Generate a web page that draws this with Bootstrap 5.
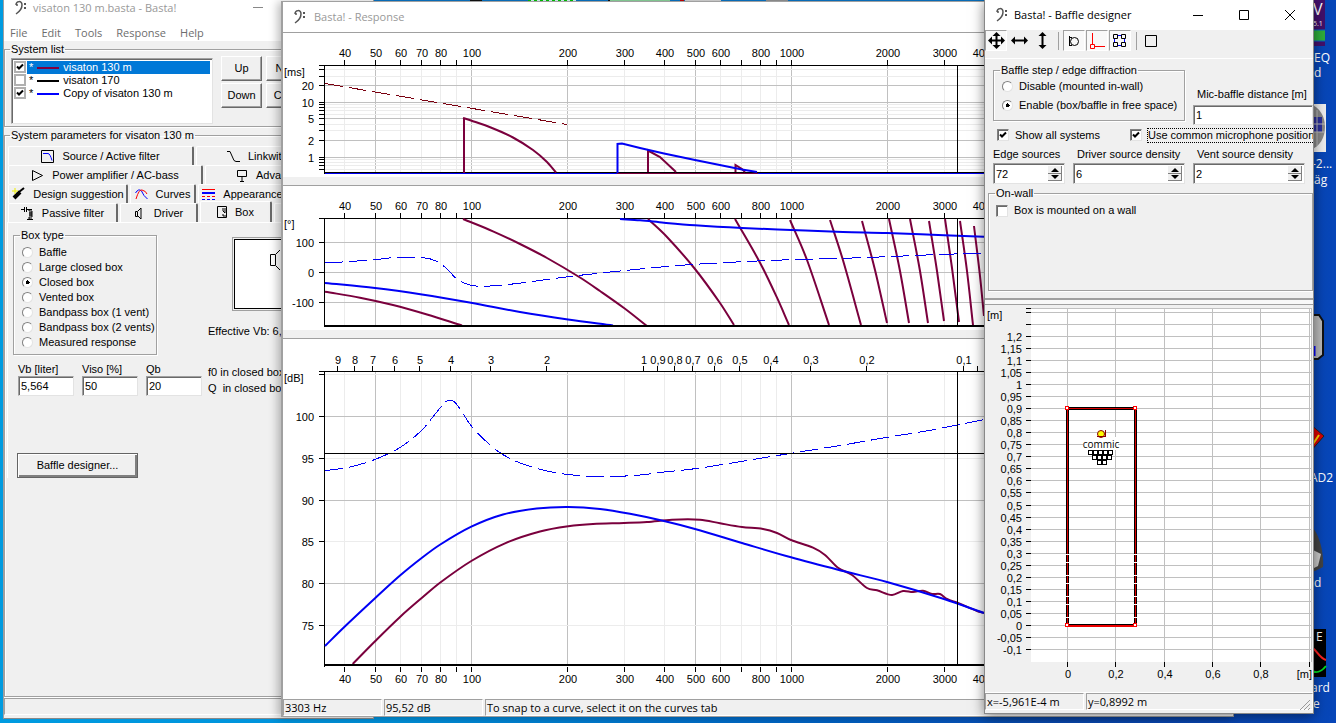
<!DOCTYPE html>
<html lang="en">
<head>
<meta charset="utf-8">
<meta name="viewport" content="width=device-width, initial-scale=1">
<title>Basta!</title>
<link href="https://cdn.jsdelivr.net/npm/bootstrap@5.3.0/dist/css/bootstrap.min.css" rel="stylesheet">
<style>
:root{--face:#f0f0f0;--shade:#a0a0a0;--dark:#696969;--ui:"Liberation Sans",Arial,sans-serif;--chrome:"Open Sans","Noto Sans",sans-serif}
html,body{height:100%}
body{margin:0;font:11px/13px var(--ui);color:#000;background:linear-gradient(90deg,#009be0 0,#0090da 30%,#0064c4 60%,#0a4ab4 80%,#0746b8);overflow:hidden}
.desktop{height:100%;overflow:hidden}
.win{position:absolute;overflow:hidden;background:var(--face);border:1px solid var(--shade)}
.win-main{left:3px;top:0;bottom:4px;width:371px;border-top:0;border-color:#d8d8d8 var(--shade) #888}
.win-resp{left:281px;right:102px;top:1px;bottom:6px;border-left-width:2px;box-shadow:-3px 1px 9px rgba(0,0,0,.28)}
.win-baffle{right:22px;width:330px;top:0;bottom:9px;border-top:0;border-color:#888;box-shadow:0 2px 12px rgba(0,0,0,.5)}
.titlebar{background:#fff;height:30px;font:11px/16px var(--chrome)}
.titlebar.idle{color:#999}
.win-main .titlebar{height:24px}
.titlebar button{width:46px;border:0;background:none;padding:0;color:inherit;line-height:0}
.titlebar h1{font:inherit;margin:0}
.menus{background:#fff;gap:14px;padding:0 6px;font:11px/17px var(--chrome);margin:0;list-style:none}
.menus a{color:#6d6d6d;text-decoration:none}
fieldset.grp{border:1px solid var(--shade);box-shadow:1px 1px #fff,inset 1px 1px #fff;min-width:0}
fieldset.grp>legend{float:none;width:auto;font:inherit;margin:0 0 0 6px;padding:0 1px}
.win-main>fieldset{margin-top:2px}
.win-main>fieldset>legend{margin-left:5px}
.listgroup{padding-bottom:2px}
.params{height:568px}
.sunk{background:#fff;border:1px solid;border-color:var(--shade) #e3e3e3 #e3e3e3 var(--shade);box-shadow:inset 1px 1px var(--dark)}
.field{width:100%;height:20px;padding:0 2px;border-radius:0;font:inherit;outline:0;min-width:0}
.push{font:inherit;border-radius:0;border:1px solid;border-color:#fff var(--dark) var(--dark) #fff;box-shadow:inset -1px -1px var(--shade);background:var(--face);padding:0;height:25px}
.push.default-btn{border:1px solid #646464;box-shadow:inset 1px 1px #fff,inset -2px -2px #808080;width:121px}
.orderbtns{display:grid;grid-template-columns:41px 41px;gap:2px 4px;align-content:start}
.systems{width:202px;height:66px;padding:2px;margin:2px 0 0 6px}
.systems label{height:13px;width:100%}
.systems label .nm{flex:1;margin-left:1px;padding-left:2px;height:13px}
.systems label.on .nm{background:#0078d7;color:#fff}
input[type=checkbox].tick{appearance:none;width:12px;height:12px;margin:0;flex:none;background:#fff;border:1px solid;border-color:#808080 #e3e3e3 #e3e3e3 #808080;box-shadow:inset 1px 1px #696969}
.systems input[type=checkbox].tick{border:2px solid #b0b0b0;box-shadow:none}
input[type=checkbox].tick:checked{background:#fff url("data:image/svg+xml,%3Csvg xmlns='http://www.w3.org/2000/svg' viewBox='0 0 8 8'%3E%3Cpath d='M1 3.5l2 2 4-4' fill='none' stroke='%23000' stroke-width='2'/%3E%3C/svg%3E") center/8px no-repeat}
input[type=radio].dot{appearance:none;width:11px;height:11px;margin:0;flex:none;border-radius:50%;border:1px solid;border-color:#808080 #e3e3e3 #e3e3e3 #808080;background:#fff}
input[type=radio].dot:checked{background:radial-gradient(circle,#000 0 2px,#fff 2px)}
.opt{display:flex;align-items:center;gap:6px}
.tabrows{padding-top:4px}
.tabrow{display:flex;gap:2px;height:19px;padding-left:3px}
.tabrow button{flex:none;display:flex;align-items:center;justify-content:center;gap:8px;height:19px;font:inherit;padding:0 2px;background:var(--face);border:1px solid #fff;border-right:2px solid var(--dark);border-bottom:0;border-radius:2px 2px 0 0;white-space:nowrap}
.tabrow button.sel{height:21px;margin-top:-2px}
.tabrow .t160{justify-content:start;padding-left:30px}
.t186{width:186px}.t195{width:195px}.t120{width:120px}.t110{width:110px}.t66{width:66px}.t78{width:78px}.t72{width:72px}.t90{width:90px}.t160{width:160px}
.sheet{border-left:1px solid #fff;border-top:1px solid #fff;margin-left:2px;padding:6px 0 0 5px;display:grid;grid-template-columns:144px 1fr;column-gap:51px}
.boxtype{padding:3px 0 4px}
.boxtype .opt{height:15px;padding-left:8px}
.preview{background:#fff;border:1px solid #000;outline:1px solid var(--shade);outline-offset:1px;height:70px;margin:10px 0 0 26px;width:95px}
.trio{display:grid;grid-template-columns:repeat(3,56px);gap:0 8px;margin:8px 0 0 5px;width:190px}
.note{white-space:nowrap}
.veff{margin-top:16px}
.qlines{padding-top:9px;line-height:16px}
.designer{padding:57px 0 0 4px}
svg{display:block;flex:none}
.chart{box-sizing:content-box;width:100%;background:#fff;border-top:1px solid var(--shade)}
.splitbar{height:8px}
.status{font:11px/15px var(--chrome);display:flex;gap:2px;border-top:1px solid #fff}
.status div{border:1px solid;border-color:var(--shade) #fff #fff var(--shade);padding:0 1px;height:17px;white-space:nowrap}
.status .cell{width:99px}
.toolbar{display:flex;align-items:center;gap:1px;height:29px;padding:1px 0 8px;border-bottom:1px solid #fff}
.toolbar button{width:22px;height:21px;padding:0;border:0;background:none;display:flex;align-items:center;justify-content:center}
.toolbar button.down{background:#f8f8f8;border:1px solid;border-color:var(--shade) #fff #fff var(--shade)}
.toolbar i{width:1px;height:18px;background:var(--shade);margin:0 3px 0 4px}
.controls{display:grid;grid-template-columns:72px 112px 112px;gap:0 8px;padding:5px 0 0 8px}
.step{grid-column:span 2;height:57px}
.step .opt{height:19px;padding-left:8px}
.mic{margin-right:-8px;padding-top:24px}
.mic span{display:block;height:17px}
.checks{grid-column:span 3;height:18px;margin-top:1px;gap:30px;padding-left:4px;white-space:nowrap}
.focused{outline:1px dotted #000}
.caps{height:19px;padding:4px 0 0 4px;white-space:nowrap}
.caps:first-of-type{padding-left:0}
.spin{position:relative;display:block}
.spin .field{height:21px}
.spin svg{position:absolute;right:3px;top:3px}
.onwall{margin:3px 0 0 3px;height:104px}
.onwall .opt{padding:4px 0 0 7px}
.rule{border-top:2px solid var(--shade);border-bottom:1px solid var(--shade);height:7px;background:#f8f8f8;margin-top:7px}
svg text{font:11px var(--ui)}
.fringe{position:absolute;right:0;top:0}
.fringe text{font:12px var(--chrome);fill:#fff}
.topedge{position:absolute;left:374px;top:0}
</style>
</head>
<body>
<main class="desktop">
<svg class="topedge" width="612" height="3"><path d="M0 0h612v3H0z" fill="#0a78cc"/><path d="M96 0h12v2H96zM234 0h3v2h-3z" fill="#111"/><path d="M154 1h48" stroke="#dff" stroke-width="3"/><path d="M154 1h48" stroke="#0c0" stroke-width="3" stroke-dasharray="3"/><path d="M236 0h60v2h-60z" fill="#8fdca0"/><path d="M306 0h4v2h-4z" fill="#c00"/><path d="M311 0h36v2h-36z" fill="#ddd"/><path d="M392 0h22v2h-22z" fill="#999"/></svg>
<svg class="fringe" width="26" height="723" viewBox="1310 0 26 723">
<path d="M1310 0h15v46h-15z" fill="#43106b"/><text x="1313" y="15" style="font-size:16px">V</text><text x="1313" y="26" style="font-size:7px">5.1</text><path d="M1310 30h15v11h-15z" fill="#2fae3c"/><path d="M1310 30h15M1310 41h15" stroke="#06c"/>
<text x="1314" y="62">EQ</text><text x="1314" y="77">d</text>
<path d="M1310 104h16v48h-16z" fill="#eee"/><path d="M1310 104c20 6 20 40 0 46z" fill="#888"/><path d="M1314 117h8v15h-8z" fill="#2b2f9a"/><path d="M1310 124h15M1310 132h15M1317 110v36" stroke="#bbb"/>
<text x="1312" y="168">-2...</text><text x="1314" y="184">äg</text>
<path d="M1310 315h9l4 6v34l-5 4h-8z" fill="#bbb" stroke="#111" stroke-width="2"/><path d="M1314 346v10" stroke="#00f" stroke-width="3"/>
<path d="M1310 424l14 12-14 16z" fill="#d00" stroke="#222"/><path d="M1313 444l6-9" stroke="#fd0" stroke-width="2"/><text x="1310" y="482">AD2</text>
<path d="M1310 525c10 8 14 30 13 42l-8 4h-5z" fill="#444"/><path d="M1313 550l8 4-3 12-4 2z" fill="#ccc"/><text x="1314" y="587">d</text>
<path d="M1310 629h16v48h-16z" fill="#000"/><text x="1316" y="641" font-weight="700">E</text><path d="M1312 648c5 2 7 10 14 12" stroke="#f22" stroke-width="2" fill="none"/><path d="M1312 671c6 3 10 0 14-5" stroke="#0d2" stroke-width="2" fill="none"/><text x="1311" y="692">ard</text><text x="1313" y="708">e</text>
</svg>

<section class="win win-main">
 <header class="titlebar idle d-flex align-items-start"><svg width="29" height="16"><g transform="translate(11 1)"><path d="M1 4C1 0 7-1 7 4c0 4-3 7-6 9M1 4h2" fill="none" stroke="#555" stroke-width="1.5"/><path d="M9 2h2v2H9zM9 6h2v2H9z" fill="#555"/></g></svg><h1>visaton 130 m.basta - Basta!</h1>
 <div class="ms-auto d-flex"><button aria-label="Minimize"><svg width="46" height="15"><path d="M18 7.500h10" stroke="#888"/></svg></button><button aria-label="Maximize"><svg width="46" height="15"><path d="M18.500 2.500h9v9h-9z" fill="none" stroke="#888"/></svg></button><button aria-label="Close"><svg width="46" height="15"><path d="M18 2l10 10M28 2L18 12" stroke="#888"/></svg></button></div></header>
 <ul class="menus d-flex"><li><a href="#">File</a></li><li><a href="#">Edit</a></li><li><a href="#">Tools</a></li><li><a href="#">Response</a></li><li><a href="#">Help</a></li></ul>
 <fieldset class="grp listgroup"><legend>System list</legend>
  <div class="d-flex gap-2"><div class="systems sunk" id="systems"></div>
  <div class="orderbtns"><button class="push">Up</button><button class="push">New</button><button class="push">Down</button><button class="push">Copy</button></div></div>
 </fieldset>
 <fieldset class="grp params"><legend>System parameters for visaton 130 m</legend>
  <div class="tabrows">
  <div class="tabrow"><button class="t186"><svg width="13" height="13" fill="none"><path d="M.5.5h12v12H.5z" stroke="#000"/><path d="M2 3.500h5q2 0 4 7" stroke="#00f"/></svg>Source / Active filter</button><button class="t160"><svg width="13" height="13" fill="none"><path d="M0 1.500h3l4 9 2 1h4" stroke="#000"/></svg>Linkwitz</button></div>
  <div class="tabrow"><button class="t195"><svg width="13" height="13" fill="none"><path d="M1.500 1.500v10l10-5z" stroke="#000"/></svg>Power amplifier / AC-bass</button><button class="t160"><svg width="12" height="13" fill="none"><path d="M1.500 1.500h9v6h-9zM6 7v5M4 12.500h4" stroke="#000"/></svg>Advanced</button></div>
  <div class="tabrow"><button class="t120"><svg width="14" height="14"><path d="M3 11l6-6" stroke="#000" stroke-width="4"/><path d="M8 5l5-4" stroke="#000" stroke-width="2"/><path d="M1 4h6M4 1v6" stroke="#ee0"/></svg>Design suggestion</button><button class="t66"><svg width="13" height="12" fill="none"><path d="M.5 5q3-5 6-2 2 5 6 8" stroke="#00f"/><path d="M1 11q3-10 6-9 4 1 5 4" stroke="#f00"/></svg>Curves</button><button class="t90"><svg width="13" height="12"><path d="M0 1.500h13" stroke="#f00"/><path d="M0 5h13" stroke="#00f" stroke-width="2"/><path d="M0 8.500h13" stroke="#f00" stroke-dasharray="3 2"/><path d="M0 11.500h13" stroke="#00f" stroke-dasharray="3 2"/></svg>Appearance</button></div>
  <div class="tabrow"><button class="t110"><svg width="13" height="13" fill="none"><path d="M0 2.500h3M3.500 0v5M5.500 0v5M5 2.500h6M8 2v2h3v2H8h3v2H8h3v2H8v2h3M6 12.500h6" stroke="#000"/></svg>Passive filter</button><button class="t78"><svg width="8" height="13" fill="none"><path d="M1.500 4.500h2v5h-2zM4 4l3-3v11L4 9" stroke="#000"/></svg><span class="ps-1">Driver</span></button><button class="t72 sel"><svg width="10" height="13" fill="none"><path d="M.5.5h9v11h-9z" stroke="#000"/><path d="M6 2v3l2 2v-5M6 8v2h3" stroke="#000"/></svg>Box</button><button class="t90">Port</button></div>
  </div>
  <div class="sheet">
   <fieldset class="grp boxtype"><legend>Box type</legend><div id="types"></div></fieldset>
   <div><div class="preview"><svg width="45" height="67" fill="none"><path d="M35.500 14.500h5v11h-5zM41 14l8-8M41 26l8 8" stroke="#000"/></svg></div><div class="note veff">Effective Vb: 6,0</div></div>
   <div class="trio"><label for="vb">Vb [liter]</label><label for="vi">Viso [%]</label><label for="qb">Qb</label><input id="vb" class="field sunk" value="5,564"><input id="vi" class="field sunk" value="50"><input id="qb" class="field sunk" value="20"></div>
   <div class="note qlines">f0 in closed box<br>Q &nbsp;in closed box</div>
   <div class="designer"><button class="push default-btn">Baffle designer...</button></div>
  </div>
 </fieldset>
 <footer class="status"><div class="flex-fill"></div></footer>
</section>

<section class="win win-resp d-flex flex-column">
 <header class="titlebar idle d-flex align-items-center"><svg width="31" height="16"><g transform="translate(11 1)"><path d="M1 4C1 0 7-1 7 4c0 4-3 7-6 9M1 4h2" fill="none" stroke="#555" stroke-width="1.5"/><path d="M9 2h2v2H9zM9 6h2v2H9z" fill="#555"/></g></svg><h1>Basta! - Response</h1></header>
 <svg class="chart" id="delay" height="144" viewBox="283 32 949 144" preserveAspectRatio="xMinYMin"></svg><div class="splitbar"></div>
 <svg class="chart" id="phase" height="144" viewBox="283 185 949 144" preserveAspectRatio="xMinYMin"></svg><div class="splitbar"></div>
 <svg class="chart" id="level" height="359" viewBox="283 338 949 359" preserveAspectRatio="xMinYMin"></svg>
 <footer class="status"><div class="cell">3303 Hz</div><div class="cell">95,52 dB</div><div class="flex-fill">To snap to a curve, select it on the curves tab</div></footer>
</section>

<section class="win win-baffle">
 <header class="titlebar d-flex align-items-center"><svg width="29" height="16"><g transform="translate(11 1)"><path d="M1 4C1 0 7-1 7 4c0 4-3 7-6 9M1 4h2" fill="none" stroke="#555" stroke-width="1.5"/><path d="M9 2h2v2H9zM9 6h2v2H9z" fill="#555"/></g></svg><h1>Basta! - Baffle designer</h1>
 <div class="ms-auto d-flex"><button aria-label="Minimize"><svg width="46" height="15"><path d="M18 7.500h10" stroke="#000"/></svg></button><button aria-label="Maximize"><svg width="46" height="15"><path d="M18.500 2.500h9v9h-9z" fill="none" stroke="#000"/></svg></button><button aria-label="Close"><svg width="46" height="15"><path d="M18 2l10 10M28 2L18 12" stroke="#000"/></svg></button></div></header>
 <div class="toolbar">
  <button class="down" aria-label="Move"><svg width="17" height="17"><path d="M3 8.500h11M8.500 3v11" stroke="#000" stroke-width="2"/><path d="M0 8.500l4-4v8zM17 8.500l-4-4v8zM8.500 0l-4 4h8zM8.500 17l-4-4h8z"/></svg></button>
  <button aria-label="Move horizontally"><svg width="17" height="17"><path d="M3 8.500h11" stroke="#000" stroke-width="2"/><path d="M0 8.500l4-4v8zM17 8.500l-4-4v8z"/></svg></button>
  <button aria-label="Move vertically"><svg width="17" height="17"><path d="M8.500 3v11" stroke="#000" stroke-width="2"/><path d="M8.500 0l-4 4h8zM8.500 17l-4-4h8z"/></svg></button><i></i>
  <button class="down" aria-label="Microphone"><svg width="12" height="12" fill="none" stroke="#000"><circle cx="6.500" cy="6.500" r="4"/><path d="M1.500 1v10M1 2.500h3M1 10.500h3"/></svg></button>
  <button class="down" aria-label="Origin"><svg width="16" height="16" fill="none" stroke="#f00"><path d="M3.500 0v11M6 13.500h10M1.500 11.500h4v4h-4z"/></svg></button>
  <button class="down" aria-label="Nodes"><svg width="14" height="14" fill="none" stroke="#000"><path d="M.5.5h4v4h-4zM8.500.5h4v4h-4zM.5 8.500h4v4h-4zM8.500 8.500h4v4h-4z"/><path d="M1.500 5v3M11.500 5v3M5 1.500h3M5 11.500h3" stroke="#00f"/></svg></button><i></i>
  <button aria-label="Rectangle"><svg width="14" height="12" fill="none" stroke="#000"><path d="M.5.5h11v11H.5z"/></svg></button>
 </div>
 <div class="controls">
  <fieldset class="grp step"><legend>Baffle step / edge diffraction</legend><label class="opt"><input type="radio" class="dot" name="step">Disable (mounted in-wall)</label><label class="opt"><input type="radio" class="dot" name="step" checked>Enable (box/baffle in free space)</label></fieldset>
  <label class="mic text-nowrap"><span class="ps-1">Mic-baffle distance [m]</span><input class="field sunk" value="1"></label>
  <div class="checks d-flex"><label class="opt"><input type="checkbox" class="tick" checked>Show all systems</label><label class="opt"><input type="checkbox" class="tick" checked><span class="focused">Use common microphone position</span></label></div>
  <label for="s1" class="caps ps-0">Edge sources</label><label for="s2" class="caps">Driver source density</label><label for="s3" class="caps">Vent source density</label>
  <span class="spin"><input id="s1" class="field sunk" value="72"></span><span class="spin"><input id="s2" class="field sunk" value="6"></span><span class="spin"><input id="s3" class="field sunk" value="2"></span>
 </div>
 <fieldset class="grp onwall"><legend>On-wall</legend><label class="opt"><input type="checkbox" class="tick">Box is mounted on a wall</label></fieldset>
 <div class="rule"></div>
 <svg id="plan" width="328" height="387" viewBox="985 306 328 387"></svg>
 <footer class="status"><div class="cell">x=-5,961E-4 m</div><div class="flex-fill d-flex justify-content-between">y=0,8992 m<svg width="14" height="14" class="mt-1"><path d="M3 12L13 2M7 12l6-6M11 12l2-2" stroke="#999"/></svg></div></footer>
</section>
</main>
<script>
const $ = id => document.getElementById(id);
$('systems').innerHTML = [['visaton 130 m','#800040',1],['visaton 170','#000',0],['Copy of visaton 130 m','#00f',1]].map(([n,c,on],i)=>
 `<label class="d-flex ${i?'':'on'}"><input type="checkbox" class="tick" ${on?'checked':''}><span class="nm d-flex align-items-center gap-1"><span>*</span><svg width="22" height="2"><path d="M0 1h22" stroke="${c}" stroke-width="2"/></svg>${n}</span></label>`).join('');
$('types').innerHTML = ['Baffle','Large closed box','Closed box','Vented box','Bandpass box (1 vent)','Bandpass box (2 vents)','Measured response'].map((n,i)=>
 `<label class="opt"><input type="radio" class="dot" name="type" ${i==2?'checked':''}>${n}</label>`).join('');
document.querySelectorAll('.spin').forEach(s=>s.insertAdjacentHTML('beforeend','<svg width="14" height="15"><path d="M0 0h14v15H0z" fill="#f0f0f0"/><path d="M13.500 0v15M0 14.500h14M0 7.500h14" stroke="#808080"/><path d="M3 6l4-4 4 4zM3 9l4 4 4-4z"/></svg>'));

const line=(x1,y1,x2,y2,c='#000',w=1)=>`<path d="M${x1} ${y1}L${x2} ${y2}" stroke="${c}" stroke-width="${w}" shape-rendering="crispEdges"/>`;
const text=(x,y,s,a='middle')=>`<text x="${x}" y="${y}" text-anchor="${a}">${s}</text>`;
const half=v=>Math.floor(v)+.5;
const fx=f=>half(471.5+320*Math.log10(f/100));
const smooth=s=>{const p=s.trim().split(' ').map(q=>q.split(',').map(Number));let d='M'+p[0];
 for(let i=0;i<p.length-1;i++){const a=p[i-1]||p[i],b=p[i],c=p[i+1],e=p[i+2]||c;
  const k=(c[0]-b[0])/3,m1=(c[1]-a[1])/((c[0]-a[0])||1),m2=(e[1]-b[1])/((e[0]-b[0])||1);
  d+=`C${b[0]+k} ${b[1]+k*m1} ${c[0]-k} ${c[1]-k*m2} ${c}`}return d};
const curve=(s,c,w=2,dash='')=>`<path d="${smooth(s)}" fill="none" stroke="${c}" stroke-width="${w}" ${dash?'stroke-dasharray="18 6" shape-rendering="crispEdges"':''}/>`;
const poly=(s,c)=>`<polyline points="${s}" fill="none" stroke="${c}" stroke-width="2"/>`;
const freqs=[40,50,60,70,80,90,100,200,300,400,500,600,700,800,900,1000,2000,3000,4000,5000,6000];
const major=[50,100,200,500,1000,2000,5000], END=1220, P='#7a003d', B='#0000f5', G='#c0c0c0', L='#ececec';
const verts=(t,b)=>freqs.map(f=>line(fx(f),t,fx(f),b,major.includes(f)?G:L)).join('');
const scale=(ty,y1,y2)=>freqs.map(f=>line(fx(f),y1,fx(f),y2)+([90,700,900].includes(f)?'':text(fx(f)+.5,ty,f))).join('');

{ const y=v=>half(156-54.6*Math.log10(v)); let s=verts(65,172);
 for(const v of [40,30,20,10,9,8,7,6,5,4,3,2,1,.9,.8,.7,.6]){const m=[20,10,5,2,1].includes(v);s+=line(325,y(v),END,y(v),m?G:L)+line(319,y(v),325,y(v));if(m)s+=text(314,y(v)+4,v,'end')}
 s+=scale(56,59,64)+line(319,64.5,END,64.5)+line(324.5,64,324.5,173)+text(284,75,'[ms]','start')+line(957.5,65,957.5,172);
 s+=line(324,171.5,END,171.5)+line(325,172.5,END,172.5,B)+line(617,172.5,758,172.5,P)+`<path d="M325 82.500L567 123.500" stroke="#7a0010" stroke-dasharray="18 6" shape-rendering="crispEdges"/>`;
 s+=line(463.5,172,463.5,117,P,2)+curve('463,117 471,119.5 492,127 513,136.5 533,149 547,161 556,171.5',P)+poly('648,171 648,149.500 660,156 676,171',P)+poly('735.500,171 735.500,164 742,168 745,171',P)+poly('617.500,172 617.500,143 622,142.500 640,147 664,152.500 695,159 742,168.500 757,171',B);
 $('delay').innerHTML=s }
{ let s=verts(218,325);
 for(const v of [100,0,-100]){const y=271.5-v*.3;s+=line(325,y,END,y,G)+line(319,y,325,y)+text(314,y+4,v,'end')}
 s+=scale(209,212,217)+line(319,217.5,END,217.5)+line(324.5,217,324.5,326)+text(284,227,'[°]','start');
 for(const c of ['325,290.7 360,296.7 393,304 427,313.5 462,324.5','463,218 493,230.3 520,243 547,257 580,276.5 600,290 624,307 647,325','648,218 667,236 695,268 720,302 734,324','735,218 760,261.7 777,296.7 789,324','790,219 807,259 829,324','830,219 843,259.3 861,324','862,220 875,269 887,322','889,218 900,270 909,322','910,218 920,270 928,322','929,220 937,270 944,320','945,218 952,267 959,321','960,220 967,270 973,324','974,225 980,275 984,315'])s+=curve(c,P);
 s+=curve('325,282 375,287 422,293.5 471,301.8 520,311 568,318.5 613,324.5',B)+curve('620,218 640,219.3 664,221.7 695,224.3 742,227 791,229 843,231 887,232 944,234.3 984,235.7 1100,239',B);
 s+=curve('325,262 347,260.7 375,258.7 397,256.3 423,256.7 437,260.3 446.7,267.7 457,278 470,284 483,285.3 510,283.3 568,275.7 613,270.7 640,268 664,265.7 695,263.3 742,260.7 791,258.7 843,257.3 887,255.7 944,253.3 984,252.3',B,1,1);
 s+=line(324,325,END,325,'#000',2)+line(957.5,218,957.5,325);
 $('phase').innerHTML=s }
{ let s=verts(371,663);
 for(const v of [105,100,95,90,85,80,75]){const y=half(415.5+(100-v)*8.36);s+=line(325,y,END,y,v%10?L:G)+line(319,y,325,y);if(v<105)s+=text(314,y+4,v,'end')}
 for(const w of [9,8,7,6,5,4,3,2,1,.9,.8,.7,.6,.5,.4,.3,.2,.1,.09,.08]){const x=fx(344/w);s+=line(x,365,x,370);if(w!==.09)s+=text(x+.5,363,String(w).replace('.',','))}
 s+=line(319,370.5,END,370.5)+line(324.5,370,324.5,666)+text(284,381,'[dB]','start')+scale(682,666,671);
 s+=curve('352.7,663 375.3,640 400.3,615.7 422.3,596.5 440.3,581.5 471.3,560 505,542.3 540,530.5 568.3,525.3 593,523 624,522 647,521 672,518.7 700,518.7 720,522.3 742,526 763,528 777,532 791,539 813,546.7 825,554 838,566.7 852,574 867,587 877,589.3 892,594 903,590 913,591 923,589.7 932,593 940,593 947,598 958,602 977,610 984,612',P);
 s+=curve('325,645 344.3,626 375.3,597 400.3,574.3 422.3,556.5 440.3,543.5 471.3,525.7 503,513.5 536.7,507.5 568.3,506 600,508 630,512.8 664,520 695,528 742,542 791,556.3 843,570 887,581 944,598 984,612',B);
 s+=curve('325,469.7 350,466 375.3,458.3 400.3,446.3 422,429 435,413.3 441.7,405 447,400 450.3,399.3 455,401.3 461.7,410.7 471.3,425 485,439.3 497,449.7 513,459 533,466.3 553,471.3 580,474.7 607,475.7 640,474 664,471 695,467.7 742,460.3 791,452.3 843,444 887,436.3 930,429.3 984,418.7',B,1,1);
 s+=line(324,664,END,664,'#000',2)+line(325,452.5,END,452.5)+line(957.5,371,957.5,663);
 $('level').innerHTML=s }
{ let s='<path d="M1031 309h281v354h-281z" fill="#fff"/>'+line(1026,309.5,1031,309.5)+line(1031,309.5,1312,309.5,G);
 for(let i=-2;i<=26;i++){const y=half(626.5-i*12.05);s+=line(1031,y,1312,y,G)+line(1026,y,1031,y);if(i<25)s+=text(1022,y+4,String(i*5/100).replace('.',','),'end')}
 for(let i=0;i<=5;i++){const x=half(1067.5+i*48.3);s+=line(x,309,x,663,G)+line(x,663,x,668);if(i<5)s+=text(x+.5,679,String(i*2/10).replace('.',','))}
 s+=line(1311.5,309,1311.5,663,G)+text(987,320,'[m]','start')+text(1312,679,'[m]','end');
 const box='M1067.500 409.500h68v217h-68z';
 s+=`<g shape-rendering="crispEdges" fill="none"><path d="${box}" stroke="#000" stroke-width="3"/><path d="${box}" stroke="#d00"/><path d="M1067.500 555V622M1135.500 555V622" stroke="#fff" stroke-width="3" stroke-dasharray="1 7 1 12"/><path d="M1068 626.500h67" stroke="#e00" stroke-width="2"/>`;
 for(const x of [1065.5,1133.5])for(const y of [407.5,624.5])s+=`<path d="M${x} ${y}h3v3h-3z" fill="#fff" stroke="#f00"/>`;
 s+='<path d="M1083 438h35v13h-35z" fill="#fff"/>';
 [[1087.5,6,453.5],[1092.5,4,458.5],[1097.5,2,463.5]].forEach(([x,n,y])=>{for(let i=0;i<n-(n==6);i++)s+=`<path d="M${x+i*5+(n==6?1:0)} ${y-2}h4v4h-4z" fill="#fff" stroke="#000"/>`});
 s+='</g><circle cx="1101" cy="435" r="3.500" fill="#ff0" stroke="#800"/><path d="M1105.500 431v7M1097 437.500h9" stroke="#800"/><text x="1101" y="449" text-anchor="middle" style="font:10px var(--chrome)">commic</text>';
 $('plan').innerHTML=s }
</script>
<script src="https://cdn.jsdelivr.net/npm/bootstrap@5.3.0/dist/js/bootstrap.bundle.min.js"></script>
</body>
</html>
